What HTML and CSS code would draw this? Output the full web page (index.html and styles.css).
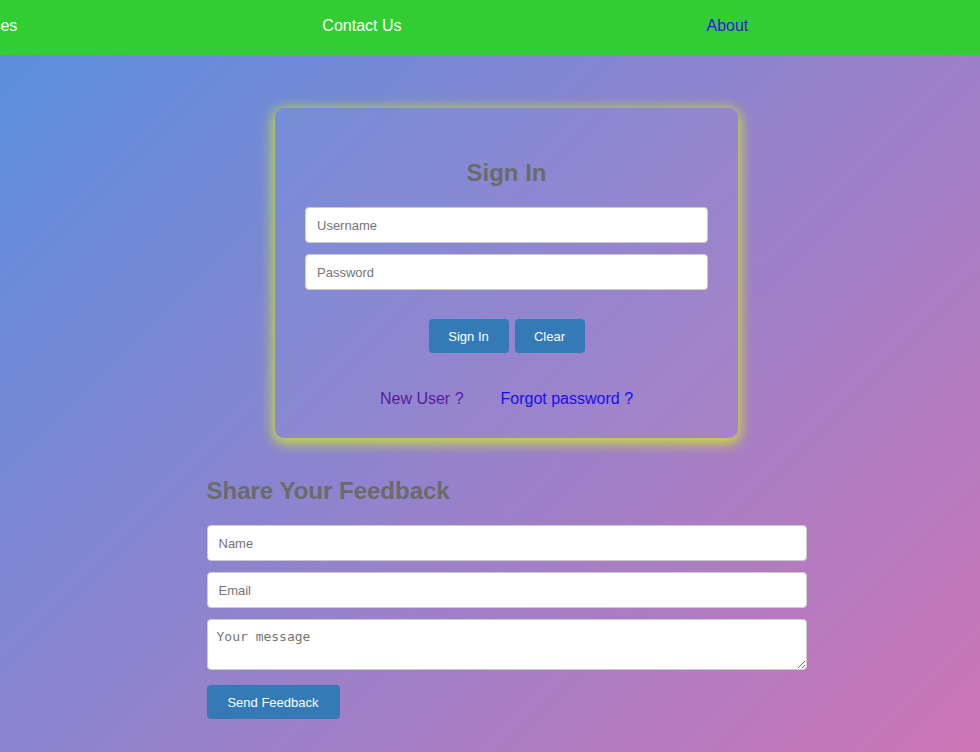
FILE: index.html
```html
<!DOCTYPE html>
<html lang="en">
<head>
<meta charset="utf-8">
<title>Sign In</title>
<link rel="stylesheet" href="styles.css">
</head>
<body>
<nav class="topnav">
  <ul class="nav-list">
    <li><a class="nav-link" href="#">Services</a></li>
    <li><a class="nav-link" href="#">Contact Us</a></li>
    <li><a class="nav-link nav-link--visited" href="#">About</a></li>
  </ul>
</nav>
<main class="main">
  <section class="card">
    <h2 class="card-title">Sign In</h2>
    <form class="signin-form">
      <input class="field" type="text" placeholder="Username">
      <input class="field" type="password" placeholder="Password">
      <div class="btn-row">
        <button class="btn btn--signin" type="button">Sign In</button>
        <button class="btn btn--clear" type="reset">Clear</button>
      </div>
    </form>
    <div class="card-links">
      <a class="link link--visited" href="#">New User ?</a>
      <a class="link" href="#">Forgot password ?</a>
    </div>
  </section>
  <section class="feedback">
    <h2 class="feedback-title">Share Your Feedback</h2>
    <form class="feedback-form">
      <input class="field" type="text" placeholder="Name">
      <input class="field" type="email" placeholder="Email">
      <textarea class="field field--area" placeholder="Your message"></textarea>
      <div><button class="btn btn--send" type="button">Send Feedback</button></div>
    </form>
  </section>
</main>
</body>
</html>
```

FILE: styles.css
```css
* { box-sizing: border-box; }
html, body { margin: 0; padding: 0; }
body {
  min-height: 752px;
  font-family: "Liberation Sans", Arial, sans-serif;
  background: linear-gradient(135deg, #5790df 0%, #8c84cf 45%, #cd75b6 100%);
  overflow: hidden;
}
.topnav {
  height: 55px;
  background: #32cd32;
  padding-top: 17px;
}
.nav-list {
  list-style: none;
  margin: 0 0 0 -44px;
  padding: 0;
  display: flex;
  gap: 305px;
  line-height: 18px;
  font-size: 16px;
  white-space: nowrap;
}
.nav-link { color: #ffffff; text-decoration: none; }
.nav-link--visited { color: #4012dc; }
.main {
  padding-left: 33px;
  padding-top: 53px;
  display: flex;
  flex-direction: column;
  align-items: center;
}
.card {
  width: 463px;
  padding: 30px 30px 30px;
  border-radius: 9px;
  background: rgba(255, 255, 255, 0.03);
  box-shadow: 0 3px 13px 2px rgba(212, 236, 36, 0.9);
}
.card-title {
  margin: 21px 0 20px;
  text-align: center;
  font-size: 24px;
  font-weight: bold;
  color: #6b6b6b;
  line-height: 28px;
}
.signin-form { display: flex; flex-direction: column; gap: 11px; }
.field {
  display: block;
  width: 100%;
  height: 36px;
  padding: 0 11px;
  border: 1px solid #cccccc;
  border-radius: 4px;
  background: #ffffff;
  font-family: "Liberation Sans", Arial, sans-serif;
  font-size: 13px;
  color: #333;
}
.field::placeholder { color: #757575; }
.field--area {
  height: 51px;
  padding: 9px 9px;
  font-family: "DejaVu Sans Mono", monospace;
  font-size: 13px;
  resize: vertical;
}
.btn-row {
  display: flex;
  justify-content: center;
  gap: 6px;
  margin-top: 18px;
}
.btn {
  height: 34px;
  padding: 0;
  border: none;
  border-radius: 4px;
  background: #337ab7;
  color: #ffffff;
  font-family: "Liberation Sans", Arial, sans-serif;
  font-size: 13px;
  text-align: center;
}
.btn--signin { width: 80px; }
.btn--clear { width: 70px; }
.card-links {
  display: flex;
  justify-content: center;
  gap: 37px;
  margin-top: 37px;
  font-size: 16px;
  line-height: 18px;
}
.link { color: #1a0dee; text-decoration: none; }
.link--visited { color: #5a1a9a; }
.feedback { width: 600px; margin-top: 39px; }
.feedback-title {
  margin: 0 0 20px;
  font-size: 24px;
  font-weight: bold;
  color: #6b6b6b;
  line-height: 28px;
}
.feedback-form { display: flex; flex-direction: column; gap: 11px; }
.btn--send { margin-top: 4px; width: 133px; }
```
